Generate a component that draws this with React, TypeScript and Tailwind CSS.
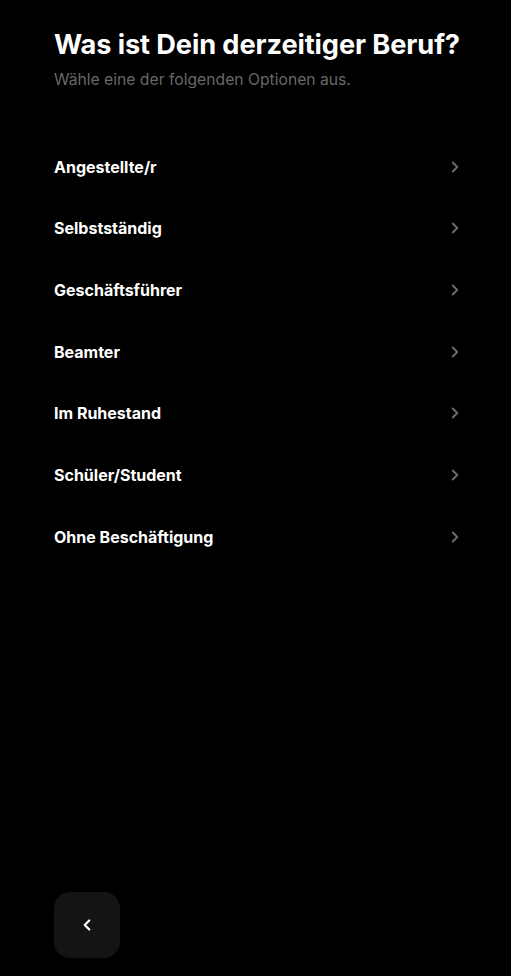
import React from "react";
import { ChevronLeft, ChevronRight } from "lucide-react";

const options = [
  "Angestellte/r",
  "Selbstständig",
  "Geschäftsführer",
  "Beamter",
  "Im Ruhestand",
  "Schüler/Student",
  "Ohne Beschäftigung",
];

export default function App() {
  return (
    <div
      className="flex h-[976px] w-full flex-col bg-black px-[54px] text-white"
      style={{ fontFamily: "Inter, 'Noto Sans', sans-serif" }}
    >
      <div className="pt-[27px]">
        <h1 className="whitespace-nowrap text-[27.2px] font-bold leading-[36px] tracking-[-0.1px]">
          Was ist Dein derzeitiger Beruf?
        </h1>
        <p className="mt-[6px] text-[15.7px] leading-[22px] text-[#686868]">
          Wähle eine der folgenden Optionen aus.
        </p>
      </div>

      <ul className="mt-[45px] flex flex-col">
        {options.map((label) => (
          <li
            key={label}
            className="flex h-[61.67px] cursor-pointer items-center justify-between"
          >
            <span className="text-[16px] font-bold">{label}</span>
            <ChevronRight
              size={18}
              strokeWidth={2.5}
              className="mr-[-7px] text-[#6b6b6b]"
            />
          </li>
        ))}
      </ul>

      <div className="mt-auto pb-[18px]">
        <button className="flex h-[66px] w-[66px] items-center justify-center rounded-[16px] bg-[#141414]">
          <ChevronLeft size={18} strokeWidth={3} className="text-white" />
        </button>
      </div>
    </div>
  );
}
